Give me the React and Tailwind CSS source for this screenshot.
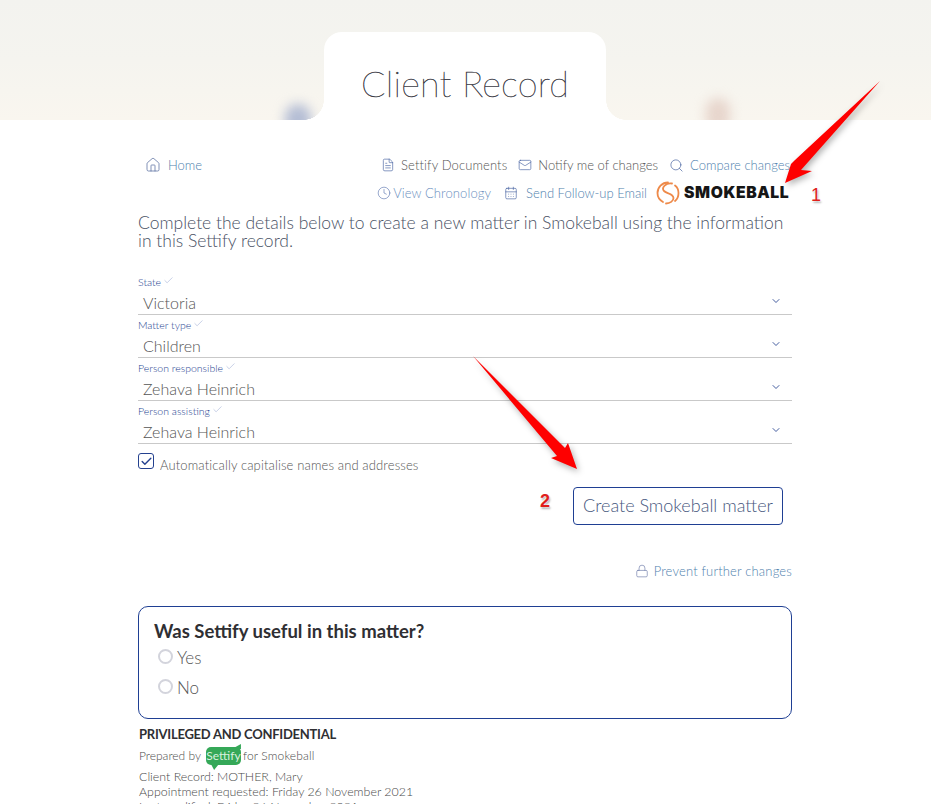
import React from "react";
import { Home, FileText, Mail, Search, Clock, CalendarDays, Lock, ChevronDown, Check } from "lucide-react";

const Field = ({ label, value }) => (
  <div className="relative h-[43px] border-b border-[#c9c9c9]">
    <div className="flex items-center gap-[2px] pt-[4px] h-[17px] text-[10.5px] leading-[13px] text-[#24418f] font-light">
      <span>{label}</span>
      <Check className="w-[11px] h-[11px] -mt-[4px] text-[#a3b2d6]" strokeWidth={1.3} />
    </div>
    <div className="flex items-center justify-between pl-[5px] pr-[10px] h-[25px] text-[16px] leading-[22px] text-[#555] pt-[3px]">
      <span>{value}</span>
      <ChevronDown className="w-[12px] h-[12px] -mt-[4px] text-[#24418f]" strokeWidth={1.7} />
    </div>
  </div>
);

const NavLink = ({ icon: I, children, dark, iconClass = "", className = "" }) => (
  <span className={`flex items-center gap-[6px] text-[13px] leading-[16px] whitespace-nowrap ${dark ? "text-[#555]" : "text-[#4f7fae]"} ${className}`}>
    <I className={`w-[14px] h-[14px] text-[#44609f] ${iconClass}`} strokeWidth={1.1} />
    {children}
  </span>
);

const Radio = ({ label }) => (
  <div className="flex items-center h-[30px] pl-[4px] text-[17px] leading-[20px] text-[#555]">
    <span className="w-[15px] h-[15px] rounded-full border-2 border-[#d3d4dc] bg-white -mt-[2px]" />
    <span className="ml-[4px] pt-[2px]">{label}</span>
  </div>
);

export default function App() {
  return (
    <div className="relative h-[804px] w-[931px] overflow-hidden bg-white font-['Lato','Open_Sans',sans-serif] font-light">
      <header className="relative h-[120px] overflow-hidden bg-[linear-gradient(180deg,#f3f3ef_0%,#f5f4ef_50%,#f9f6ef_100%)]">
        <div className="absolute left-[285px] top-[104px] w-[26px] h-[34px] rounded-full bg-[#b4bdd4] blur-[6px]" />
        <div className="absolute left-[706px] top-[98px] w-[24px] h-[34px] rounded-full bg-[#e7d5cc] blur-[6px]" />
        <div className="absolute left-[304px] top-[100px] w-[20px] h-[20px] bg-[radial-gradient(100%_100%_at_0_0,transparent_98%,white_100%)]" />
        <div className="absolute left-[606px] top-[100px] w-[20px] h-[20px] bg-[radial-gradient(100%_100%_at_100%_0,transparent_98%,white_100%)]" />
        <div className="absolute left-[324px] top-[32px] w-[282px] h-[88px] bg-white rounded-t-[18px] flex justify-center pt-[26px]">
          <h1 className="text-[36px] leading-[50px] font-['Lato',sans-serif] font-thin text-[#3a3a44] [-webkit-text-stroke:0.4px_#3a3a44] tracking-[0.2px]">Client Record</h1>
        </div>
      </header>

      <main className="w-[654px] ml-[138px]">
        <div className="flex justify-between pt-[37px] h-[65px]">
          <div className="pl-[7px] flex items-start">
            <NavLink icon={Home} iconClass="!w-[16px] !h-[16px] text-[#53699c] mr-[1px]">Home</NavLink>
          </div>
          <div className="flex flex-col items-end">
            <div className="flex items-center gap-[11px] h-[16px] pr-[2px]">
              <NavLink icon={FileText} dark className="tracking-[0.12px]">Settify Documents</NavLink>
              <NavLink icon={Mail} dark>Notify me of changes</NavLink>
              <NavLink icon={Search} iconClass="!w-[15px] !h-[15px]">Compare changes</NavLink>
            </div>
          </div>
        </div>

        <div className="flex items-center justify-end h-[28px] -mt-[6px] gap-[13px]">
          <span className="flex items-center gap-[2px] text-[13px] leading-[16px] text-[#6b8fc0] tracking-[0.1px] whitespace-nowrap">
            <Clock className="w-[14px] h-[14px] text-[#5f78b0]" strokeWidth={1.1} />View Chronology
          </span>
          <NavLink icon={CalendarDays} iconClass="mr-[2px]">Send Follow-up Email</NavLink>
          <span className="flex items-center w-[136px] ml-[-4px]">
            <svg width="24" height="24" viewBox="0 0 24 24" fill="none" stroke="#ee8a4a" strokeWidth="1.8" strokeLinecap="round">
              <path d="M12 1.5C6 1.5 1.5 6.5 1.5 12C1.5 16 3.5 19 7 21" />
              <path d="M16 2.5C10 1.5 5 6.5 8 10C11 13 17 12 17.5 17C17.5 20 14 22.5 10 22.5" />
              <path d="M19 4.5C21 6 22.5 9 22.5 12C22.5 15 21.5 18 19 20" />
            </svg>
            <span className="ml-[4px] font-['Inter','Liberation_Sans',sans-serif] font-black text-[15.7px] leading-[18px] tracking-[0.6px] text-[#161616]">SMOKEBALL</span>
          </span>
        </div>

        <p className="mt-[7px] text-[17.5px] leading-[18px] text-[#4a5265]">
          Complete the details below to create a new matter in Smokeball using the information in this Settify record.
        </p>

        <div className="mt-[22px]">
          <Field label="State" value="Victoria" />
          <Field label="Matter type" value="Children" />
          <Field label="Person responsible" value="Zehava Heinrich" />
          <Field label="Person assisting" value="Zehava Heinrich" />
        </div>

        <label className="flex items-center mt-[9px] h-[16px] text-[13px] leading-[16px] tracking-[0.13px] text-[#555]">
          <span className="flex items-center justify-center w-[16px] h-[16px] rounded-[3px] border border-[#24418f]">
            <Check className="w-[13px] h-[13px] text-[#24418f]" strokeWidth={2.6} />
          </span>
          <span className="ml-[6px] pt-[8px]">Automatically capitalise names and addresses</span>
        </label>

        <div className="flex justify-end pr-[9px] mt-[18px]">
          <button className="w-[210px] h-[38px] rounded-[4px] border border-[#1f3f93] bg-white pb-[2px] text-[18px] leading-[22px] text-[#47587e]">
            Create Smokeball matter
          </button>
        </div>

        <div className="flex justify-end mt-[38px] h-[16px] items-center gap-[5px] text-[13px] leading-[16px] tracking-[0.17px] text-[#4f7fae]">
          <Lock className="w-[14px] h-[14px] text-[#6b78a8]" strokeWidth={1.1} />
          Prevent further changes
        </div>

        <section className="mt-[27px] h-[113px] rounded-[10px] border border-[#1f3f93] pl-[15px] pt-[13px]">
          <h2 className="text-[18.5px] leading-[22px] font-bold text-[#2f2f33]">Was Settify useful in this matter?</h2>
          <div>
            <Radio label="Yes" />
            <Radio label="No" />
          </div>
        </section>

        <div className="pl-[1px] pt-[7px] text-[#4a4a4a]">
          <div className="text-[13px] leading-[16px] font-bold tracking-[-0.25px] text-[#2f2f33]">PRIVILEGED AND CONFIDENTIAL</div>
          <div className="flex items-center h-[24px] mt-[2px] text-[12px] leading-[14px]">
            Prepared by
            <span className="relative ml-[5px] mr-[2px] flex items-center justify-center w-[35px] h-[18px] rounded-[5px] bg-[#35a858] text-[12px] leading-[14px] text-[#d8f0df] font-normal">
              Settify
              <span className="absolute -top-[3px] right-[0px] w-[9px] h-[5px] bg-[#35a858] [clip-path:polygon(0_100%,100%_0,100%_100%)]" />
              <span className="absolute -bottom-[5px] left-[5px] w-[8px] h-[6px] bg-[#35a858] [clip-path:polygon(0_0,100%_0,40%_100%)]" />
            </span>
            <span className="tracking-[0.15px]">for Smokeball</span>
          </div>
          <div className="mt-[1px] text-[12.4px] leading-[15px]">
            <div>Client Record: MOTHER, Mary</div>
            <div>Appointment requested: Friday 26 November 2021</div>
            <div className="whitespace-nowrap">Last modified: Friday 26 November 2021</div>
          </div>
        </div>
      </main>

      <svg className="absolute left-0 top-0 pointer-events-none [filter:drop-shadow(2px_3px_3px_rgba(0,0,0,0.3))]" width="931" height="804" viewBox="0 0 931 804">
        <polygon fill="#fe0000" points="880,81 801,170 812,171 785,183 791,164 795,160" />
        <polygon fill="#fe0000" points="473,356 565,448 568,443 577,469 551,458 557,456" />
      </svg>
      <span className="absolute left-[811px] top-[184px] font-['Liberation_Sans',sans-serif] font-normal text-[18px] leading-[22px] text-[#e0201c] [text-shadow:0_0_2px_white,1px_2px_2px_rgba(0,0,0,0.3)]">1</span>
      <span className="absolute left-[540px] top-[490px] font-['Liberation_Sans',sans-serif] font-bold text-[18px] leading-[22px] text-[#e0201c] [text-shadow:0_0_2px_white,1px_2px_2px_rgba(0,0,0,0.3)]">2</span>
    </div>
  );
}
